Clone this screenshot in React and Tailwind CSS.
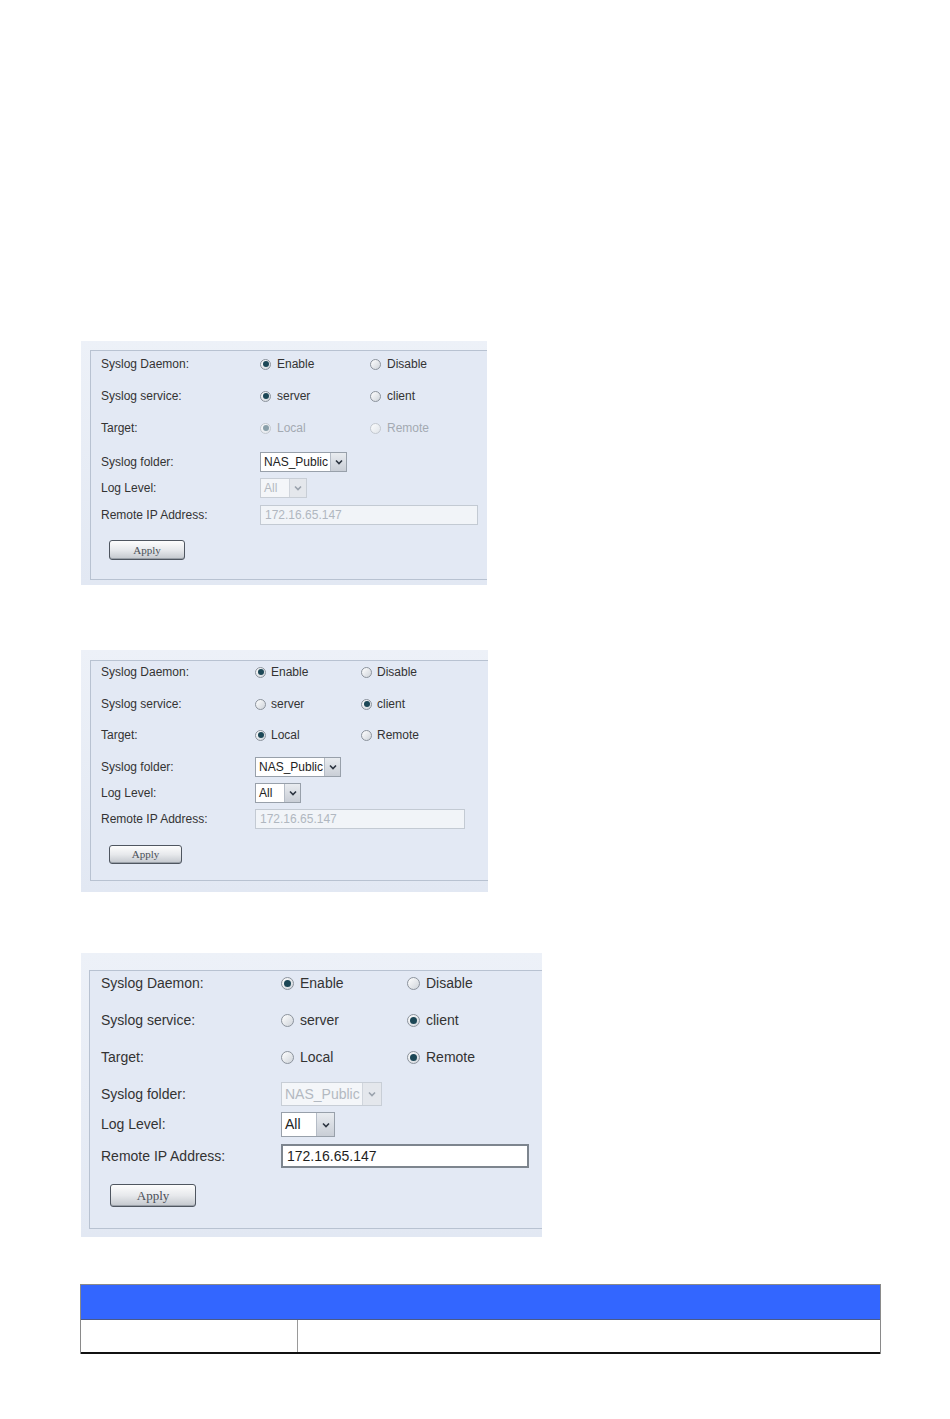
import React from "react";

const FONT = { fontFamily: '"Liberation Sans", Arial, sans-serif' };
const SERIF = { fontFamily: '"Liberation Serif", "Times New Roman", serif' };

function Radio({ checked, disabled, size }) {
  const big = size === "lg";
  return (
    <span
      className={
        (big ? "w-[13px] h-[13px] " : "w-[11px] h-[11px] ") +
        "shrink-0 rounded-full border flex items-center justify-center " +
        (disabled
          ? "border-[#c3c8cf] bg-gradient-to-br from-[#fbfcfd] to-[#e1e5ea]"
          : "border-[#8c939c] bg-gradient-to-br from-white to-[#cfd4da]")
      }
    >
      {checked && (
        <span
          className={
            (big ? "w-[7px] h-[7px] " : "w-[6px] h-[6px] ") +
            "rounded-full " +
            (disabled ? "bg-[#8aa0aa]" : "bg-[#1c4756]")
          }
        />
      )}
    </span>
  );
}

function Chevron({ disabled }) {
  return (
    <svg width="8" height="6" viewBox="0 0 8 6">
      <path
        d="M1 1.5 L4 4.5 L7 1.5"
        fill="none"
        stroke={disabled ? "#9aa2ac" : "#2c3440"}
        strokeWidth="1.6"
      />
    </svg>
  );
}

function Select({ value, disabled, box, text, arrow, textCls }) {
  return (
    <div
      className={
        "flex " +
        box +
        " border " +
        (disabled ? "border-[#c8ced6] bg-[#f4f6f9]" : "border-[#98a0aa] bg-white")
      }
    >
      <div className={"flex items-center pl-[3px] overflow-hidden whitespace-nowrap " + text + " " + textCls + (disabled ? " text-[#b3b9c1]" : " text-[#222]")}>
        {value}
      </div>
      <div
        className={
          "flex items-center justify-center border-l " +
          arrow +
          (disabled
            ? " border-[#d0d5dc] bg-[#e4e7ec]"
            : " border-[#b5bcc6] bg-gradient-to-b from-[#e9ecf0] to-[#c9ced6]")
        }
      >
        <Chevron disabled={disabled} />
      </div>
    </div>
  );
}

function Input({ value, disabled, box, textCls }) {
  return (
    <div
      className={
        "flex items-center pl-[4px] " +
        box +
        " " +
        textCls +
        (disabled
          ? " border border-[#c3cad3] bg-[#f1f4f8] text-[#b0b7c0]"
          : " border-2 border-[#7d858e] bg-white text-[#1e1e1e]")
      }
    >
      {value}
    </div>
  );
}

function ApplyButton({ cls }) {
  return (
    <div
      className={
        "flex items-center justify-center rounded-[3px] border border-[#4f5660] bg-gradient-to-b from-[#fdfdfd] via-[#e7e9ec] to-[#c3c7cd] shadow-[inset_0_-1px_0_#9aa0a8] text-[#4a4f57] " +
        cls
      }
      style={SERIF}
    >
      Apply
    </div>
  );
}

function RadioRow({ cfg, row, label, a, b }) {
  return (
    <div className={"flex items-center " + row}>
      <div className={cfg.labelW + " text-[#333]"}>{label}</div>
      <div className={"flex items-center " + cfg.col1W + " " + cfg.gap}>
        <Radio checked={a.checked} disabled={a.disabled} size={cfg.radio} />
        <span className={a.disabled ? "text-[#a3aab2]" : "text-[#333]"}>{a.text}</span>
      </div>
      <div className={"flex items-center " + cfg.gap}>
        <Radio checked={b.checked} disabled={b.disabled} size={cfg.radio} />
        <span className={b.disabled ? "text-[#a3aab2]" : "text-[#333]"}>{b.text}</span>
      </div>
    </div>
  );
}

function Panel({ cfg, state }) {
  return (
    <div className={"flex flex-col bg-gradient-to-b from-[#edf1f8] to-[#e2e8f3] " + cfg.wrap} style={FONT}>
      <div className={"border-l border-t border-b border-[#b8c2d1] bg-[#e3e9f4] flex flex-col " + cfg.inner}>
        <div className={"flex flex-col " + cfg.pad + " " + cfg.text}>
          <RadioRow
            cfg={cfg}
            row={cfg.rows[0]}
            label="Syslog Daemon:"
            a={{ text: "Enable", checked: true }}
            b={{ text: "Disable", checked: false }}
          />
          <RadioRow
            cfg={cfg}
            row={cfg.rows[1]}
            label="Syslog service:"
            a={{ text: "server", checked: state.server }}
            b={{ text: "client", checked: !state.server }}
          />
          <RadioRow
            cfg={cfg}
            row={cfg.rows[2]}
            label="Target:"
            a={{ text: "Local", checked: state.local, disabled: state.server }}
            b={{ text: "Remote", checked: !state.local, disabled: state.server }}
          />
          <div className={"flex items-center " + cfg.rows[3]}>
            <div className={cfg.labelW + " text-[#333]"}>Syslog folder:</div>
            <Select
              value="NAS_Public"
              disabled={state.folderOff}
              box={cfg.nas.box}
              text={cfg.nas.text}
              arrow={cfg.nas.arrow}
              textCls={cfg.text}
            />
          </div>
          <div className={"flex items-center " + cfg.rows[4]}>
            <div className={cfg.labelW + " text-[#333]"}>Log Level:</div>
            <Select
              value="All"
              disabled={state.levelOff}
              box={cfg.lvl.box}
              text={cfg.lvl.text}
              arrow={cfg.lvl.arrow}
              textCls={cfg.text}
            />
          </div>
          <div className={"flex items-center " + cfg.rows[5]}>
            <div className={cfg.labelW + " text-[#333]"}>Remote IP Address:</div>
            <Input value="172.16.65.147" disabled={state.ipOff} box={cfg.ip} textCls={cfg.text} />
          </div>
          <ApplyButton cls={cfg.btn} />
        </div>
      </div>
    </div>
  );
}

const PANEL_A = {
  wrap: "w-[406px] h-[244px]",
  inner: "ml-[9px] mt-[9px] h-[230px]",
  pad: "pl-[10px]",
  text: "text-[12px]",
  labelW: "w-[159px]",
  col1W: "w-[110px]",
  gap: "gap-[6px]",
  radio: "sm",
  rows: [
    "mt-[3px] h-[20px]",
    "mt-[12px] h-[20px]",
    "mt-[12px] h-[20px]",
    "mt-[14px] h-[20px]",
    "mt-[6px] h-[20px]",
    "mt-[7px] h-[20px]",
  ],
  nas: { box: "w-[87px] h-[20px]", text: "w-[70px]", arrow: "w-[16px]" },
  lvl: { box: "w-[47px] h-[20px]", text: "w-[29px]", arrow: "w-[17px]" },
  ip: "w-[218px] h-[20px]",
  btn: "ml-[8px] mt-[15px] w-[76px] h-[20px] text-[11px]",
};

const PANEL_B = {
  wrap: "w-[407px] h-[242px]",
  inner: "ml-[9px] mt-[10px] h-[221px]",
  pad: "pl-[10px]",
  text: "text-[12px]",
  labelW: "w-[154px]",
  col1W: "w-[106px]",
  gap: "gap-[5px]",
  radio: "sm",
  rows: [
    "mt-[1px] h-[20px]",
    "mt-[12px] h-[20px]",
    "mt-[11px] h-[20px]",
    "mt-[12px] h-[20px]",
    "mt-[6px] h-[20px]",
    "mt-[6px] h-[20px]",
  ],
  nas: { box: "w-[86px] h-[20px]", text: "w-[69px]", arrow: "w-[16px]" },
  lvl: { box: "w-[46px] h-[20px]", text: "w-[29px]", arrow: "w-[16px]" },
  ip: "w-[210px] h-[20px]",
  btn: "ml-[8px] mt-[16px] w-[73px] h-[19px] text-[11px]",
};

const PANEL_C = {
  wrap: "w-[461px] h-[284px]",
  inner: "ml-[8px] mt-[17px] h-[259px]",
  pad: "pl-[11px]",
  text: "text-[14px]",
  labelW: "w-[180px]",
  col1W: "w-[126px]",
  gap: "gap-[6px]",
  radio: "lg",
  rows: [
    "mt-[0px] h-[24px]",
    "mt-[13px] h-[24px]",
    "mt-[13px] h-[24px]",
    "mt-[13px] h-[24px]",
    "mt-[6px] h-[25px]",
    "mt-[7px] h-[24px]",
  ],
  nas: { box: "w-[101px] h-[24px]", text: "w-[81px]", arrow: "w-[19px]" },
  lvl: { box: "w-[54px] h-[25px]", text: "w-[35px]", arrow: "w-[18px]" },
  ip: "w-[248px] h-[24px]",
  btn: "ml-[9px] mt-[16px] w-[86px] h-[23px] text-[13px]",
};

export default function App() {
  return (
    <div className="w-[950px] h-[1419px] bg-white pl-[80px] pt-[341px]" style={FONT}>
      <div className="ml-[1px] flex flex-col">
        <Panel cfg={PANEL_A} state={{ server: true, local: true, folderOff: false, levelOff: true, ipOff: true }} />
        <div className="mt-[65px] flex flex-col">
          <Panel cfg={PANEL_B} state={{ server: false, local: true, folderOff: false, levelOff: false, ipOff: true }} />
        </div>
        <div className="mt-[61px] flex flex-col">
          <Panel cfg={PANEL_C} state={{ server: false, local: false, folderOff: true, levelOff: false, ipOff: false }} />
        </div>
      </div>

      <div className="mt-[47px] w-[801px] border-l border-r border-[#8a8a8a]">
        <div className="h-[36px] bg-[#3366ff] border-t border-[#8a8a8a] border-b border-b-[#4a5a8a]" />
        <div className="flex h-[34px] border-b-2 border-[#111]">
          <div className="w-[217px] border-r border-[#9a9a9a]" />
          <div className="flex-1" />
        </div>
      </div>
    </div>
  );
}
